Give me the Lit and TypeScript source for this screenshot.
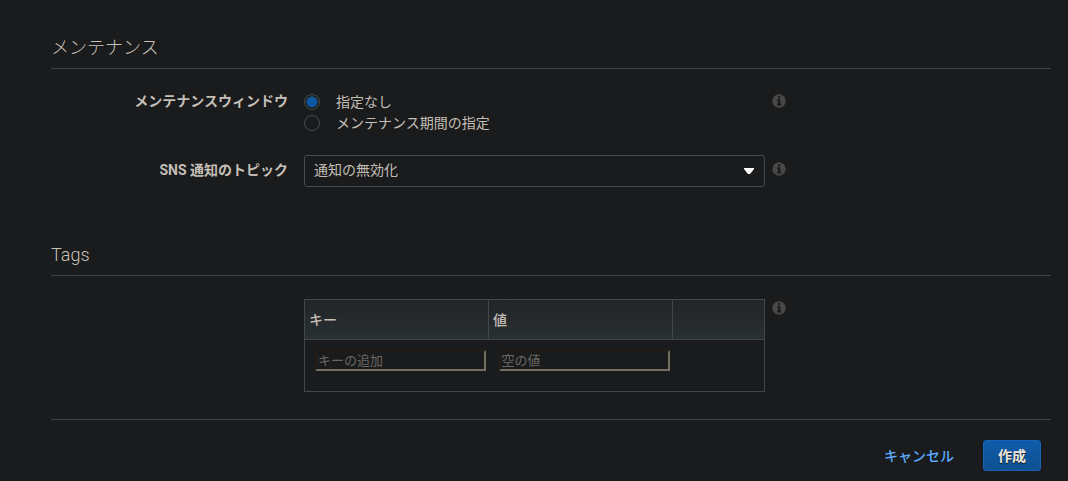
import { LitElement, html, css } from "lit";
import { customElement, state } from "lit/decorators.js";

@customElement("info-icon")
class InfoIcon extends LitElement {
  static styles = css`
    :host { display: block; width: 14px; height: 14px; }
    .glyph { display: block; width: 14px; height: 14px; }
  `;

  render() {
    return html`
      <svg class="glyph" viewBox="0 0 14 14" aria-hidden="true">
        <circle cx="7" cy="7" r="6.7" fill="#484848" />
        <path d="M6 2.2h2.2v2H6z M5 5.2h3.3v4.6h1v1.6H5V9.8h1V6.8H5z" fill="#1a1b1c" />
      </svg>
    `;
  }
}

@customElement("app-root")
class AppRoot extends LitElement {
  @state() private mode = "none";

  static styles = css`
    :host {
      display: block;
      box-sizing: border-box;
      min-height: 100vh;
      padding: 36px 17px 10px 51px;
      background: #1a1b1c;
      color: #c4bfb7;
      font: 14px/20px Roboto, "Noto Sans CJK JP", sans-serif;
    }
    .heading {
      margin: 0 0 22px;
      padding-bottom: 8px;
      border-bottom: 1px solid #3f4243;
      font-size: 18px;
      font-weight: 300;
      line-height: 24px;
      color: #c8c2b9;
    }
    .maintenance { margin-bottom: 56px; }
    .row {
      display: grid;
      grid-template-columns: 237px minmax(0, 461px) 14px;
      column-gap: 16px;
      align-items: start;
      margin: 0 0 22px;
    }
    .tags-row { margin-top: 23px; }
    .label { text-align: right; font-weight: 700; }
    .select-label { line-height: 30px; }
    .info { margin: 3px 0 0 -9px; }
    .select-info { margin-top: 7px; }
    .tags-info { margin-top: 2px; }
    .option { display: flex; align-items: center; gap: 16px; height: 21px; }
    .radio {
      appearance: none;
      box-sizing: border-box;
      width: 16px;
      height: 16px;
      margin: 0;
      border: 1px solid #4a4d4e;
      border-radius: 50%;
    }
    .radio:checked { background: radial-gradient(circle, #0d56a0 5px, transparent 6px); }
    .select-wrap { display: grid; align-items: center; }
    .select, .arrow { grid-area: 1 / 1; }
    .select {
      appearance: none;
      width: 100%;
      height: 32px;
      padding: 0 32px 2px 9px;
      border: 1px solid #484b4c;
      border-radius: 3px;
      background: #1a1b1c;
      color: inherit;
      font: inherit;
    }
    .arrow {
      justify-self: end;
      width: 10px;
      height: 6px;
      margin-right: 11px;
      pointer-events: none;
    }
    .tags {
      width: 100%;
      table-layout: fixed;
      border-collapse: collapse;
      border: 1px solid #424748;
    }
    .head { background: linear-gradient(#232425, #293033); }
    .th {
      height: 39px;
      padding: 0 4px;
      border: 1px solid #424748;
      text-align: left;
      font-weight: 500;
    }
    .wide { width: 40%; box-sizing: border-box; }
    .td { height: 31px; padding: 10px 3px 10px 10px; vertical-align: top; }
    .input {
      display: block;
      box-sizing: border-box;
      width: 100%;
      height: 21px;
      padding: 0 1px;
      border: 2px solid;
      border-color: #211c18 #776f62 #776f62 #211c18;
      background: transparent;
      color: inherit;
      font: 13px/17px Roboto, "Noto Sans CJK JP", sans-serif;
    }
    .input::placeholder { color: #6a6762; opacity: 1; }
    .footer {
      display: flex;
      justify-content: flex-end;
      align-items: center;
      gap: 29px;
      margin-top: 27px;
      padding: 20px 10px 0 0;
      border-top: 1px solid #3f4243;
    }
    .cancel { color: #5aabff; font-weight: 500; text-decoration: none; }
    .create {
      height: 31px;
      padding: 0 14px;
      border: 1px solid #1563b8;
      border-radius: 3px;
      background: linear-gradient(#105ba9, #0e5092);
      color: #ece8e1;
      font: inherit;
      font-weight: 700;
      text-shadow: 0 1px 1px #151515;
    }
  `;

  private option(value: string, text: string) {
    return html`
      <label class="option">
        <input class="radio" type="radio" name="window" .value=${value}
          .checked=${this.mode === value} @change=${() => (this.mode = value)} />
        ${text}
      </label>
    `;
  }

  render() {
    return html`
      <section class="maintenance">
        <h2 class="heading">メンテナンス</h2>
        <div class="row" role="radiogroup" aria-labelledby="window-label">
          <span class="label" id="window-label">メンテナンスウィンドウ</span>
          <div>
            ${this.option("none", "指定なし")}
            ${this.option("custom", "メンテナンス期間の指定")}
          </div>
          <info-icon class="info"></info-icon>
        </div>
        <div class="row">
          <label class="label select-label" for="topic">SNS 通知のトピック</label>
          <div class="select-wrap">
            <select class="select" id="topic"><option>通知の無効化</option></select>
            <svg class="arrow" viewBox="0 0 10 6" aria-hidden="true">
              <path d="M0 0h10v1L6 6H4L0 1z" fill="#fff" />
            </svg>
          </div>
          <info-icon class="info select-info"></info-icon>
        </div>
      </section>
      <section>
        <h2 class="heading">Tags</h2>
        <div class="row tags-row">
          <span></span>
          <table class="tags">
            <thead class="head">
              <tr>
                <th class="th wide" scope="col">キー</th>
                <th class="th wide" scope="col">値</th>
                <th class="th"></th>
              </tr>
            </thead>
            <tbody>
              <tr>
                <td class="td"><input class="input" aria-label="キー" placeholder="キーの追加" /></td>
                <td class="td"><input class="input" aria-label="値" placeholder="空の値" /></td>
                <td class="td"></td>
              </tr>
            </tbody>
          </table>
          <info-icon class="info tags-info"></info-icon>
        </div>
      </section>
      <footer class="footer">
        <a class="cancel" href="#">キャンセル</a>
        <button class="create" type="button">作成</button>
      </footer>
    `;
  }
}
